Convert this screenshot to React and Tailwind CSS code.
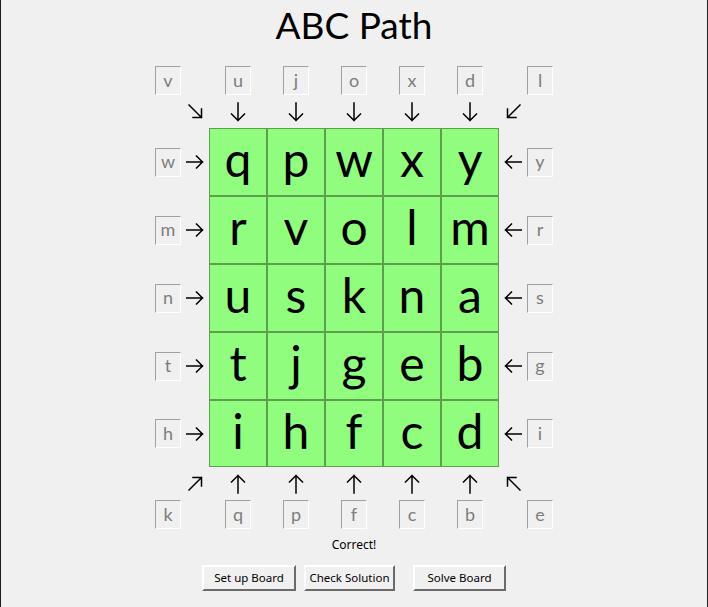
import React from "react";

const top = ["u", "j", "o", "x", "d"];
const bottom = ["q", "p", "f", "c", "b"];
const rows = [
  { l: "w", cells: ["q", "p", "w", "x", "y"], r: "y" },
  { l: "m", cells: ["r", "v", "o", "l", "m"], r: "r" },
  { l: "n", cells: ["u", "s", "k", "n", "a"], r: "s" },
  { l: "t", cells: ["t", "j", "g", "e", "b"], r: "g" },
  { l: "h", cells: ["i", "h", "f", "c", "d"], r: "i" },
];

function Clue({ ch }) {
  return (
    <div className="w-[26px] h-[29px] border border-t-[#a0a0a0] border-l-[#a0a0a0] border-b-white border-r-white flex items-center justify-center text-[18px] leading-none text-[#7d7d7d] pb-[2px]">
      {ch}
    </div>
  );
}

const S = { stroke: "#000", strokeWidth: 1.5, fill: "none", strokeLinecap: "square" };

function Arrow({ dir }) {
  if (dir === "down" || dir === "up") {
    const flip = dir === "up";
    return (
      <svg width="16" height="20" viewBox="0 0 16 20" style={flip ? { transform: "scaleY(-1)" } : undefined}>
        <path d="M8 1 V18.5 M1.5 12 L8 18.5 L14.5 12" {...S} />
      </svg>
    );
  }
  if (dir === "right" || dir === "left") {
    const flip = dir === "left";
    return (
      <svg width="18" height="14" viewBox="0 0 18 14" style={flip ? { transform: "scaleX(-1)" } : undefined}>
        <path d="M0.5 7 H16.5 M10.5 1 L16.5 7 L10.5 13" {...S} />
      </svg>
    );
  }
  const t = {
    dr: "none",
    dl: "scaleX(-1)",
    ur: "scaleY(-1)",
    ul: "scale(-1,-1)",
  }[dir];
  return (
    <svg width="15" height="15" viewBox="0 0 15 15" style={{ transform: t }}>
      <path d="M1 1 L13.5 13.5 M13.5 5 V13.5 H5" {...S} />
    </svg>
  );
}

function Cell({ ch }) {
  return (
    <div className="border border-[#5c9f4d] bg-[#90fd7e] flex items-center justify-center text-[48px] leading-none text-black pb-[6px]">
      {ch}
    </div>
  );
}

function Btn({ children, cls }) {
  return (
    <button className={`h-[26px] ${cls} border-2 border-t-white border-l-white border-r-[#6b6b6b] border-b-[#6b6b6b] bg-[#f0f0f0] text-[11.5px] text-black flex items-center justify-center`} style={{ fontFamily: '"Noto Sans", sans-serif' }}>
      {children}
    </button>
  );
}

export default function App() {
  return (
    <div className="w-[708px] h-[607px] bg-[#f0f0f0] border-x border-[#1e1e1e] flex flex-col items-center overflow-hidden" style={{ fontFamily: 'Lato, "Noto Sans", sans-serif' }}>
      <div className="mt-[3px] h-[44px] text-[37px] leading-[44px] text-black">ABC Path</div>
      <div className="mt-[19px] grid grid-cols-[26px_28px_58px_58px_58px_58px_58px_28px_26px] grid-rows-[29px_33px_68px_68px_68px_68px_67px_33px_29px]">
        <Clue ch="v" />
        <div />
        {top.map((c, i) => (
          <div key={i} className="flex justify-center"><Clue ch={c} /></div>
        ))}
        <div />
        <Clue ch="l" />
        <div />
        <div className="flex items-center justify-center"><Arrow dir="dr" /></div>
        {top.map((c, i) => (
          <div key={i} className="flex items-center justify-center"><Arrow dir="down" /></div>
        ))}
        <div className="flex items-center justify-center"><Arrow dir="dl" /></div>
        <div />
        {rows.map((r, ri) => (
          <React.Fragment key={ri}>
            <div className="flex items-center"><Clue ch={r.l} /></div>
            <div className="flex items-center justify-center"><Arrow dir="right" /></div>
            {r.cells.map((c, ci) => (
              <Cell key={ci} ch={c} />
            ))}
            <div className="flex items-center justify-center"><Arrow dir="left" /></div>
            <div className="flex items-center"><Clue ch={r.r} /></div>
          </React.Fragment>
        ))}
        <div />
        <div className="flex items-center justify-center"><Arrow dir="ur" /></div>
        {bottom.map((c, i) => (
          <div key={i} className="flex items-center justify-center"><Arrow dir="up" /></div>
        ))}
        <div className="flex items-center justify-center"><Arrow dir="ul" /></div>
        <div />
        <Clue ch="k" />
        <div />
        {bottom.map((c, i) => (
          <div key={i} className="flex justify-center"><Clue ch={c} /></div>
        ))}
        <div />
        <Clue ch="e" />
      </div>
      <div className="mt-[8px] h-[16px] leading-[16px] text-[12px] text-black" style={{ fontFamily: '"Noto Sans", sans-serif' }}>Correct!</div>
      <div className="mt-[12px] flex">
        <Btn cls="w-[94px]">Set up Board</Btn>
        <Btn cls="w-[91px] ml-[8px]">Check Solution</Btn>
        <Btn cls="w-[93px] ml-[18px]">Solve Board</Btn>
      </div>
    </div>
  );
}
